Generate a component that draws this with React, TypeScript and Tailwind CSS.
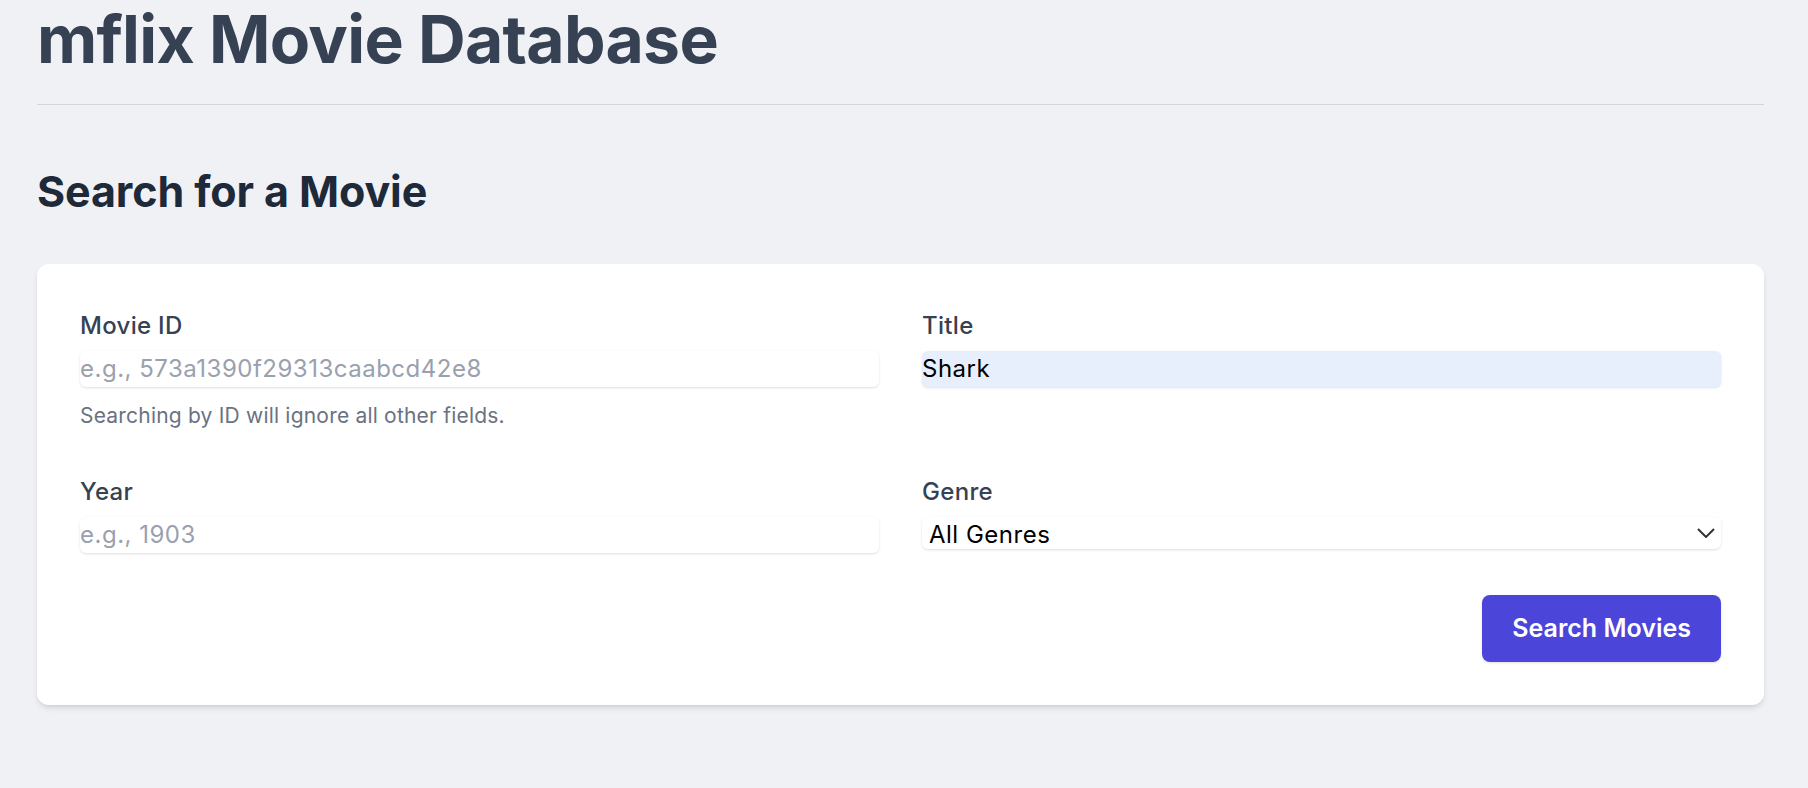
import { useState } from "react";

const genres = ["All Genres", "Action", "Comedy", "Drama", "Horror", "Sci-Fi"] as const;

function Label({ children }: { children: React.ReactNode }) {
  return (
    <label className="mb-[8px] block text-[24px] leading-[34px] font-medium tracking-[0.3px] text-gray-700">
      {children}
    </label>
  );
}

export default function App() {
  const [title, setTitle] = useState("Shark");

  return (
    <div className="min-h-screen bg-[#eff1f5] pl-[37px] pr-[44px] pt-[6px] font-['Inter','Noto_Sans',sans-serif]">
      <h1 className="text-[66px] leading-[66px] font-bold tracking-[-0.7px] text-gray-700">
        mflix Movie Database
      </h1>
      <hr className="mt-[32px] border-gray-300" />

      <h2 className="mt-[60px] text-[43px] leading-[53px] font-bold tracking-[-0.1px] text-gray-800">
        Search for a Movie
      </h2>

      <form
        className="mt-[46px] rounded-xl bg-white px-[43px] pt-[45px] pb-[43px] shadow-md"
        onSubmit={(e) => e.preventDefault()}
      >
        <div className="grid grid-cols-2 gap-x-[43px] gap-y-[44px]">
          <div>
            <Label>Movie ID</Label>
            <input
              className="block h-[36px] w-full rounded-md bg-white text-[24px] tracking-[0.5px] text-black shadow-sm outline-none placeholder:text-gray-400"
              placeholder="e.g., 573a1390f29313caabcd42e8"
            />
            <p className="mt-[14px] text-[21px] leading-[30px] tracking-[0.2px] text-gray-500">
              Searching by ID will ignore all other fields.
            </p>
          </div>

          <div>
            <Label>Title</Label>
            <input
              className="block h-[36px] w-full rounded-md bg-[#e8effc] text-[24px] tracking-[0.5px] text-black shadow-sm outline-none"
              value={title}
              onChange={(e) => setTitle(e.target.value)}
            />
          </div>

          <div>
            <Label>Year</Label>
            <input
              className="block h-[36px] w-full rounded-md bg-white text-[24px] tracking-[0.5px] text-black shadow-sm outline-none placeholder:text-gray-400"
              placeholder="e.g., 1903"
            />
          </div>

          <div>
            <Label>Genre</Label>
            <div className="relative">
              <select className="block h-[32px] w-full appearance-none rounded-md bg-white pl-[7px] text-[24px] tracking-[0.5px] text-black shadow-sm outline-none">
                {genres.map((g) => (
                  <option key={g}>{g}</option>
                ))}
              </select>
              <svg
                className="pointer-events-none absolute right-[6px] top-[11px]"
                width="18"
                height="10"
                viewBox="0 0 18 10"
                fill="none"
              >
                <path d="M1 1l8 8 8-8" stroke="#333" strokeWidth="2" />
              </svg>
            </div>
          </div>
        </div>

        <div className="mt-[42px] flex justify-end">
          <button
            type="submit"
            className="h-[67px] rounded-lg bg-[#4c45d9] px-[30px] text-[25px] font-semibold text-white shadow-sm"
          >
            Search Movies
          </button>
        </div>
      </form>
    </div>
  );
}
